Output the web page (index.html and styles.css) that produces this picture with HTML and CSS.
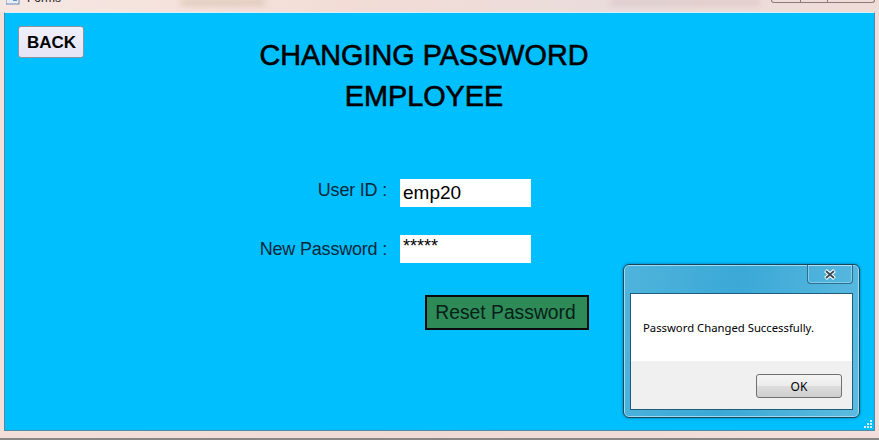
FILE: index.html
```html
<!DOCTYPE html>
<html lang="en">
<head>
    <meta charset="UTF-8">
    <meta name="viewport" content="width=device-width, initial-scale=1.0">
    <title>Forms</title>
    <link rel="stylesheet" href="styles.css">
</head>
<body>
    <div class="window">
        <div class="titlebar">
            <div class="app-title">
                <svg class="app-icon" width="14" height="14" viewBox="0 0 14 14">
                    <rect x="0" y="0" width="13" height="13" fill="#e8eef8" stroke="#6f86b5"/>
                    <rect x="1" y="1" width="11" height="3" fill="#3f73c4"/>
                    <rect x="7" y="6" width="4" height="4" fill="#5b8fd8"/>
                </svg>
                <span>Forms</span>
            </div>
            <div class="smudges">
                <span class="smudge smudge-a"></span>
                <span class="smudge smudge-b"></span>
            </div>
            <div class="controls">
                <span class="control control-min"></span>
                <span class="control control-max"></span>
                <span class="control control-close"></span>
            </div>
        </div>
        <div class="client">
            <button class="back-btn">BACK</button>
            <div class="main">
                <h1 class="heading">CHANGING PASSWORD<br>EMPLOYEE</h1>
                <div class="form">
                    <label class="field-label" for="userid">User ID :</label>
                    <input class="field" id="userid" type="text" value="emp20">
                    <label class="field-label field-label-pass" for="newpass">New Password :</label>
                    <div class="field field-pass" id="newpass">*****</div>
                    <button class="reset-btn">Reset Password</button>
                </div>
            </div>

            <div class="dialog">
                <div class="dialog-bar">
                    <button class="dialog-close">
                        <svg width="14" height="11" viewBox="0 0 14 11">
                            <path d="M2.5 1.5 L11.5 9.5 M11.5 1.5 L2.5 9.5" stroke="#fff" stroke-width="4"/>
                            <path d="M3 2 L11 9 M11 2 L3 9" stroke="#3a4a58" stroke-width="1.8"/>
                        </svg>
                    </button>
                </div>
                <div class="dialog-body">
                    <div class="dialog-msg">Password Changed Successfully.</div>
                    <div class="dialog-foot">
                        <button class="ok-btn">OK</button>
                    </div>
                </div>
            </div>

            <svg class="grip" width="10" height="10" viewBox="0 0 10 10">
                <path d="M7 1h2v2h-2z M4 4h2v2h-2z M7 4h2v2h-2z M1 7h2v2h-2z M4 7h2v2h-2z M7 7h2v2h-2z" fill="#d8eef6"/>
            </svg>
        </div>
    </div>
</body>
</html>
```

FILE: styles.css
```css
* {
    box-sizing: border-box;
}
html, body {
    margin: 0;
    height: 100%;
}
body {
    font-family: "Liberation Sans", Arial, sans-serif;
    overflow: hidden;
    background: #8f8f8f;
}
.window {
    width: 879px;
    height: 440px;
    padding-bottom: 7px;
    background: linear-gradient(to right, #f3dfda, #efd9d4 50%, #f2dfdb);
    border-bottom: 2px solid #8a8686;
    display: flex;
    flex-direction: column;
}
.titlebar {
    height: 12px;
    flex: none;
    position: relative;
    overflow: hidden;
    display: flex;
    justify-content: space-between;
    background: linear-gradient(to right, #f6e7e2, #f3dcd6 40%, #eadcdc 70%, #f0dcd7);
}
.app-title {
    display: flex;
    gap: 7px;
    margin: -9px 0 0 6px;
    font-size: 12px;
    line-height: 14px;
    color: #222;
}
.app-icon {
    flex: none;
}
.smudge {
    position: absolute;
    top: 0;
    height: 5px;
    border-radius: 3px;
    filter: blur(3px);
    opacity: 0.6;
}
.smudge-a {
    left: 180px;
    width: 85px;
    background: #c9b199;
}
.smudge-b {
    left: 610px;
    width: 150px;
    background: #cfb6b8;
}
.controls {
    display: flex;
    height: 3px;
    margin-right: 4px;
    border: 1px solid #8b7a7a;
    border-top: none;
    border-radius: 0 0 4px 4px;
}
.control {
    border-left: 1px solid #8b7a7a;
}
.control:first-child {
    border-left: none;
}
.control-min {
    width: 28px;
}
.control-max {
    width: 27px;
}
.control-close {
    width: 47px;
}
.client {
    flex: 1;
    position: relative;
    margin: 0 4px;
    padding: 13px 0 0 13px;
    background: #00bfff;
    border: 1px solid #4f8ba0;
    border-top-color: #d8f0f8;
    display: flex;
    gap: 166px;
    align-items: flex-start;
}
.back-btn {
    width: 66px;
    height: 32px;
    padding: 1px 0 0 1px;
    font-family: inherit;
    font-size: 17px;
    font-weight: bold;
    color: #000;
    background: linear-gradient(to bottom, #f0f0fb, #e4e4f6);
    border: 1px solid #8a94a0;
    border-radius: 3px;
}
.main {
    width: 348px;
}
.heading {
    margin: 9px 0 0;
    font-size: 28.8px;
    line-height: 41px;
    font-weight: normal;
    text-align: center;
    color: #000;
    -webkit-text-stroke: 0.6px #000;
}
.form {
    display: grid;
    grid-template-columns: 137px 131px;
    column-gap: 13px;
    row-gap: 28px;
    margin-top: 62px;
    align-items: start;
}
.field-label {
    font-size: 18px;
    line-height: 22px;
    letter-spacing: -0.2px;
    text-align: right;
    color: #06283a;
    white-space: nowrap;
}
.field-label-pass {
    padding-top: 3px;
}
.field {
    width: 131px;
    height: 28px;
    padding: 0 3px;
    border: none;
    outline: none;
    background: #fff;
    font-family: inherit;
    font-size: 19px;
    color: #000;
}
.field-pass {
    font-size: 18px;
    line-height: 22px;
}
.reset-btn {
    grid-column: 1 / 3;
    justify-self: end;
    width: 164px;
    height: 35px;
    margin: 4px -58px 0 0;
    padding: 1px 3px 0 0;
    font-family: inherit;
    font-size: 19.3px;
    color: #06201a;
    background: #2e8b57;
    border: 2px solid #0a0a0a;
}
.dialog {
    position: absolute;
    left: 618px;
    top: 251px;
    width: 237px;
    height: 154px;
    padding: 0 6px 7px;
    display: flex;
    flex-direction: column;
    border: 1px solid #17475e;
    border-radius: 6px;
    background: linear-gradient(100deg, #4fb4dc, #3ba8d6 45%, #5cbbe0);
    box-shadow: inset 0 0 0 1px #9fdcf2, 0 0 3px #0a6f96;
}
.dialog-bar {
    height: 28px;
    flex: none;
    display: flex;
    justify-content: flex-end;
}
.dialog-close {
    width: 46px;
    height: 19px;
    padding: 0;
    display: flex;
    align-items: center;
    justify-content: center;
    background: transparent;
    border: 1px solid #2a6f90;
    border-top: none;
    border-radius: 0 0 4px 4px;
    box-shadow: inset 0 0 0 1px rgba(190, 230, 245, 0.5);
}
.dialog-body {
    flex: 1;
    display: flex;
    flex-direction: column;
    border: 1px solid #1d5c7a;
    background: #f0f0f0;
}
.dialog-msg {
    height: 67px;
    padding: 26px 0 0 12px;
    background: #fff;
    font-family: "Noto Sans", "Open Sans", sans-serif;
    font-size: 11.3px;
    line-height: 16px;
    color: #000;
}
.dialog-foot {
    flex: 1;
    display: flex;
    justify-content: flex-end;
    align-items: flex-start;
    padding: 13px 10px 0 0;
}
.ok-btn {
    width: 86px;
    height: 24px;
    padding: 0;
    font-family: "Noto Sans", "Open Sans", sans-serif;
    font-size: 12px;
    color: #000;
    background: linear-gradient(to bottom, #f4f4f4 0%, #ececec 48%, #dcdcdc 52%, #cfcfcf 100%);
    border: 1px solid #707070;
    border-radius: 3px;
}
.grip {
    position: absolute;
    right: 1px;
    bottom: 1px;
}
```
